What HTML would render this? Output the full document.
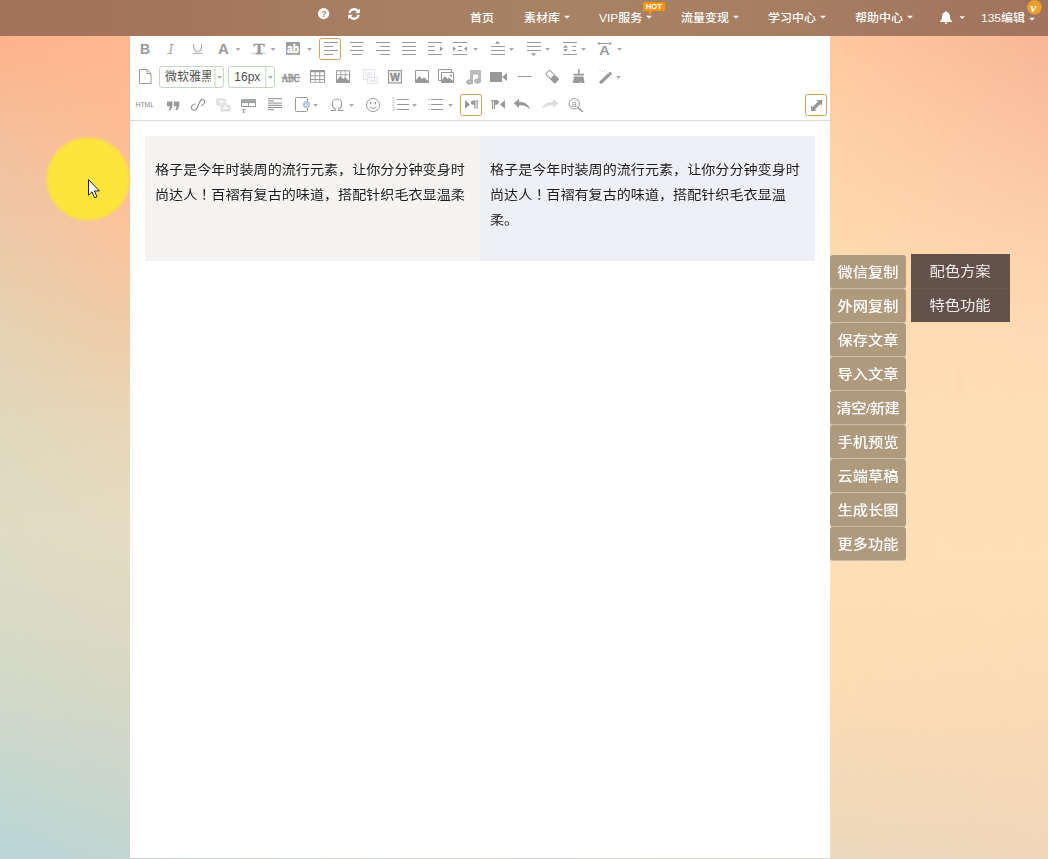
<!DOCTYPE html>
<html lang="zh-CN">
<head>
<meta charset="utf-8">
<title>135编辑器</title>
<style>
*{box-sizing:border-box;margin:0;padding:0}
html,body{width:1048px;height:859px;overflow:hidden}
body{position:relative;font-family:"Liberation Sans","Noto Sans CJK SC",sans-serif;background:#f6d2ac}
.abs{position:absolute}
#bgL{left:0;top:0;width:130px;height:859px;background:linear-gradient(180deg,#ffb68e 0px,#ffb890 36px,#febd94 136px,#fbc49c 230px,#f0cca8 330px,#e9d7b9 430px,#e6dcc2 530px,#dedac4 620px,#d6d8c6 700px,#c2d6d2 859px)}
#bgL2{left:0;top:0;width:130px;height:859px;background:linear-gradient(180deg,#fdb088 0px,#fdb28a 36px,#f4c09c 136px,#ecc8a8 230px,#e4d2b2 330px,#e0d8bc 430px,#dedcc4 530px,#d8dac6 620px,#d0d8c8 700px,#b8d6d6 859px);-webkit-mask-image:linear-gradient(90deg,#000,transparent);mask-image:linear-gradient(90deg,#000,transparent)}
#bgR{left:830px;top:0;width:218px;height:859px;background:linear-gradient(180deg,#ffc49c 0px,#ffc8a0 36px,#ffd2a8 140px,#ffdab0 250px,#ffddb3 330px,#ffdfb4 450px,#ffdfb4 560px,#fbdcb4 700px,#ecd8bc 859px)}
#bgR2{left:830px;top:0;width:218px;height:859px;background:linear-gradient(180deg,#f6b293 0px,#f8b696 36px,#fbc3a2 140px,#fdd2ac 250px,#fedab4 330px,#ffdeb5 450px,#ffdfb5 560px,#fbdab4 700px,#f0d6ba 859px);-webkit-mask-image:linear-gradient(90deg,transparent,#000);mask-image:linear-gradient(90deg,transparent,#000)}
#bgB{left:130px;top:857px;width:700px;height:2px;background:linear-gradient(90deg,#c2d6d2,#ecd8bc)}
#nav{left:0;top:0;width:1048px;height:36px;background:linear-gradient(90deg,#a27259 0%,#a3755b 15%,#a67e62 33%,#a88264 55%,#a67e62 75%,#a2775e 90%,#a0745d 100%);color:#fff;font-size:12px;font-weight:500}
#nav .it{position:absolute;top:0;height:36px;line-height:38px;white-space:nowrap;transform:translateY(-.300px) scaleY(.94);transform-origin:0 17.500px}
#nav .car{display:inline-block;width:0;height:0;border-left:3px solid transparent;border-right:3px solid transparent;border-top:3px solid #fff;vertical-align:middle;margin-left:4px;position:relative;top:-2px}
#panel{left:130px;top:36px;width:700px;height:821.600px;background:#fff}
#sep{left:130px;top:120px;width:700px;height:1px;background:#dcdcdc}
.box{top:136px;height:125px;width:335px;font-size:14px;line-height:25px;color:#1c1c1c;padding:21.300px 0 0 9.500px;white-space:nowrap}
.sb{left:830px;width:76px;height:34px;border-radius:3px;background:#b09a7e;border-bottom:1px solid #cbbba8;color:#fff;font-size:15px;font-weight:500;line-height:32px;text-align:center;white-space:nowrap}
#dark{left:911px;top:254px;width:99px;height:68px;background:#62524a;color:#f3efea;font-size:15px;text-align:center}
#dark div{height:34px;line-height:33px}
.sb span{display:inline-block;transform:scale(1.015,.91);position:relative;top:1.300px}
#dark span{display:inline-block;transform:scale(1.02,.91);position:relative;top:.300px}
#dark div+div{border-top:1px solid #67595a;line-height:31.600px}
.tc{font-style:normal;font-family:"Liberation Sans","Noto Sans CJK TC",sans-serif}
.box span{display:block;transform:scale(1.006,.93);transform-origin:0 0;line-height:26.900px}
.cb{top:66px;height:22px;border:1px solid #c5d6c2;border-radius:3px;background:#fff;color:#505050;font-size:12px;line-height:20px}
</style>
</head>
<body>
<div id="bgL" class="abs"></div><div id="bgL2" class="abs"></div>
<div id="bgR" class="abs"></div><div id="bgR2" class="abs"></div>
<div id="bgB" class="abs"></div>
<div id="panel" class="abs"></div>
<div id="sep" class="abs"></div>

<div id="nav" class="abs">
  <div class="it" style="left:470px">首页</div>
  <div class="it" style="left:524px">素材库<span class="car"></span></div>
  <div class="it" style="left:599px">VIP服务<span class="car"></span></div>
  <div class="it" style="left:681px">流量变现<span class="car"></span></div>
  <div class="it" style="left:768px">学习中心<span class="car"></span></div>
  <div class="it" style="left:855px">帮助中心<span class="car"></span></div>
  <div class="it" style="left:981px">135编辑<span class="car" style="top:0px"></span></div>
</div>
<svg class="abs" style="left:0;top:0" width="1048" height="36" viewBox="0 0 1048 36" font-family="Liberation Sans, sans-serif">
<!-- help -->
<circle cx="323.600" cy="13.600" r="5.600" fill="#fff"/>
<text x="321.300" y="16.800" font-size="8.500" font-weight="bold" fill="#a67f62">?</text>
<!-- refresh -->
<g fill="none" stroke="#fff" stroke-width="2.300">
<path d="M349.600 13.200A4.400 4.400 0 0 1 357.600 11.200"/>
<path d="M358.400 14.800A4.400 4.400 0 0 1 350.400 16.800"/>
</g>
<path d="M359.800 8.600v4.600h-4.600z" fill="#fff"/>
<path d="M348.200 19.300v-4.600h4.600z" fill="#fff"/>
<!-- HOT badge -->
<path d="M644.700 2h18.800a1.500 1.500 0 0 1 1.500 1.500v5.900a1.500 1.500 0 0 1-1.500 1.500h-10.600l-3.700 4.300-.3-4.300h-4.200a1.500 1.500 0 0 1-1.500-1.500v-5.900a1.500 1.500 0 0 1 1.500-1.500z" fill="#fb9410"/>
<text x="645.700" y="8.800" font-size="6.600" font-weight="bold" fill="#fff" textLength="16.300" lengthAdjust="spacingAndGlyphs">HOT</text>
<!-- bell -->
<path d="M946 11.300c.6 0 1 .4 1 1 2 .5 3 2.200 3 4.400 0 2.300.8 3.600 2 4.500v.8h-12v-.8c1.200-.9 2-2.200 2-4.500 0-2.200 1-3.900 3-4.400 0-.6.400-1 1-1z M944.500 22.600h3a1.500 1.500 0 0 1-3 0z" fill="#fff"/>
<path d="M959.500 16.300h5.400l-2.700 2.800z" fill="#fff"/>
<!-- V badge -->
<circle cx="1034.500" cy="7.300" r="7.300" fill="#eba02a"/>
<text x="1030.300" y="11.600" font-size="13.500" font-weight="bold" font-style="italic" font-family="Liberation Serif, serif" fill="#fff">v</text>
</svg>


<!-- content boxes -->
<div class="abs box" style="left:145px;background:#f5f4f2"><span>格子是今年时装周的流行元素，让你分分钟变身时<br>尚达人<i class="tc" lang="zh-TW">！</i>百褶有复古的味道，搭配针织毛衣显温柔</span></div>
<div class="abs box" style="left:480px;background:#eff0f5"><span>格子是今年时装周的流行元素，让你分分钟变身时<br>尚达人<i class="tc" lang="zh-TW">！</i>百褶有复古的味道，搭配针织毛衣显温<br>柔。</span></div>

<!-- side buttons -->
<div class="abs sb" style="top:255px"><span>微信复制</span></div>
<div class="abs sb" style="top:289px"><span>外网复制</span></div>
<div class="abs sb" style="top:323px"><span>保存文章</span></div>
<div class="abs sb" style="top:357px"><span>导入文章</span></div>
<div class="abs sb" style="top:391px;letter-spacing:-0.5px"><span>清空/新建</span></div>
<div class="abs sb" style="top:425px"><span>手机预览</span></div>
<div class="abs sb" style="top:459px"><span>云端草稿</span></div>
<div class="abs sb" style="top:493px"><span>生成长图</span></div>
<div class="abs sb" style="top:527px"><span>更多功能</span></div>
<div id="dark" class="abs"><div><span>配色方案</span></div><div><span>特色功能</span></div></div>

<!-- toolbar comboboxes -->
<div class="abs cb" style="left:159px;width:65px"><span style="position:absolute;left:5px;top:0;width:45.500px;overflow:hidden;white-space:nowrap">微软雅黑</span></div>
<div class="abs cb" style="left:228px;width:47px"><span style="position:absolute;left:5.300px;top:0">16px</span></div>

<svg class="abs" style="left:0;top:0" width="1048" height="130" viewBox="0 0 1048 130" font-family="Liberation Sans, sans-serif">
<defs>
<path id="dn" d="M-2.500 -1.500h5l-2.500 3z" fill="#a9b0a9"/>
</defs>
<g fill="#999" stroke="none">
<!-- ROW 1 -->
<text x="140" y="54" font-size="14" font-weight="bold">B</text>
<text x="168.200" y="53.900" font-size="14.500" font-style="italic" font-family="Liberation Serif, serif" fill="#adadad">I</text>
<path d="M169.600 44.500h4.500M167 53.500h5" fill="none" stroke="#a8a8a8" stroke-width="0.800"/>
<path d="M193.700 44v4a3.900 3.500 0 0 0 7.800 0V44" fill="none" stroke="#a0a0a0" stroke-width="1"/>
<rect x="193" y="52.800" width="9.200" height="1" fill="#a0a0a0"/>
<text x="218" y="53.800" font-size="15" font-weight="bold">A</text>
<use href="#dn" x="238" y="49.5"/>
<rect x="249.500" y="52.600" width="18" height="1.600" rx=".8" fill="#ececec"/><rect x="252" y="52.200" width="13" height="2.200" rx="1" fill="#e2e2e2"/>
<text x="253.600" y="53.600" font-size="15.500" font-weight="bold" font-family="Liberation Serif, serif" textLength="11.200" lengthAdjust="spacingAndGlyphs" stroke="#999" stroke-width=".3">T</text>
<use href="#dn" x="273" y="49.5"/>
<rect x="286" y="42" width="14" height="12.800" fill="#9a9c9e"/>
<text x="287" y="52.900" font-size="12" font-weight="bold" fill="#fff" stroke="#fff" stroke-width=".350" textLength="12" lengthAdjust="spacingAndGlyphs">ab</text>
<use href="#dn" x="309.5" y="49.5"/>
<!-- align left (active) -->
<rect x="319.500" y="38.500" width="21" height="21" rx="2" fill="#fff" stroke="#d2a064"/>
<g fill="#999">
<rect x="324" y="42" width="14" height="1"/><rect x="324" y="46" width="9" height="1"/><rect x="324" y="50" width="14" height="1"/><rect x="324" y="54" width="9" height="1"/>
<!-- center -->
<rect x="350" y="42" width="14" height="1"/><rect x="352" y="46" width="10" height="1"/><rect x="350" y="50" width="14" height="1"/><rect x="352" y="54" width="10" height="1"/>
<!-- right -->
<rect x="376" y="42" width="14" height="1"/><rect x="380" y="46" width="10" height="1"/><rect x="376" y="50" width="14" height="1"/><rect x="380" y="54" width="10" height="1"/>
<!-- justify -->
<rect x="402" y="42" width="14" height="1"/><rect x="402" y="46" width="14" height="1"/><rect x="402" y="50" width="14" height="1"/><rect x="402" y="54" width="14" height="1"/>
<!-- indent -->
<rect x="428" y="42" width="14" height="1"/><rect x="428" y="46" width="7" height="1"/><rect x="428" y="50" width="7" height="1"/><rect x="428" y="54" width="14" height="1"/>
<path d="M440 46.200l3 2.500-3 2.500z"/>
<!-- justify-indent -->
<rect x="453" y="42" width="14" height="1"/><rect x="453" y="54" width="14" height="1"/>
<rect x="458" y="46" width="4" height="1"/><rect x="458" y="50" width="4" height="1"/>
<path d="M453 46.200l3 2.500-3 2.500z"/><path d="M467 46.200l-3 2.500 3 2.500z"/>
<use href="#dn" x="475.500" y="49.500"/>
<!-- rowspacing top -->
<path d="M497.500 41l2.700 2.800h-5.400z"/>
<rect x="491" y="46" width="14" height="1"/><rect x="491" y="50" width="14" height="1"/><rect x="491" y="54" width="14" height="1"/>
<use href="#dn" x="511.500" y="49.500"/>
<!-- rowspacing bottom -->
<rect x="527" y="42" width="14" height="1"/><rect x="527" y="46" width="14" height="1"/><rect x="527" y="50" width="14" height="1"/>
<path d="M533.500 56l2.700-2.800h-5.400z"/>
<use href="#dn" x="547.500" y="49.500"/>
<!-- lineheight -->
<rect x="563" y="42" width="14" height="1"/><rect x="563" y="54" width="14" height="1"/>
<rect x="572" y="46" width="4" height="1"/><rect x="572" y="50" width="4" height="1"/>
<path d="M565.500 45l2.500 2.700h-5z"/><path d="M565.500 51.700l2.500-2.700h-5z"/>
<use href="#dn" x="583.500" y="49.500"/>
<!-- letterspacing -->
<rect x="598.500" y="43" width="12" height="1"/><path d="M597.300 43.500l2.200-1.700v3.400z"/><path d="M611.700 43.500l-2.200-1.700v3.400z"/>
<text x="599.200" y="54.800" font-size="13.200" font-weight="bold" textLength="10.500" lengthAdjust="spacingAndGlyphs">A</text>
<use href="#dn" x="619.500" y="49.500"/>
</g>
</g>
<g fill="#999" stroke="none">
<!-- doc -->
<path d="M139.500 69.500h7.500l4 4v10h-11.500z M147 69.500v4h4" fill="none" stroke="#999"/>
<!-- combobox dividers/arrows -->
<rect x="214.500" y="67" width="1" height="20" fill="#c5d6c2"/><use href="#dn" x="219.500" y="77.500"/>
<rect x="265.300" y="67" width="1" height="20" fill="#c5d6c2"/><use href="#dn" x="270.500" y="77.500"/>
<!-- ABC strike -->
<text x="282" y="81.800" font-size="12.500" font-weight="bold" font-family="Liberation Serif, serif" textLength="17.500" lengthAdjust="spacingAndGlyphs" stroke="#999" stroke-width="0.600">ABC</text>
<rect x="281.500" y="77" width="19" height="1.200"/>
<!-- table -->
<path d="M310 70h15v12.800h-15z M311 72.200v3.100h3.600v-3.100z M315.500 72.200v3.100h3.800v-3.100z M320.200 72.200v3.100h3.800v-3.100z M311 76.200v2.900h3.600v-2.900z M315.500 76.200v2.900h3.800v-2.900z M320.200 76.200v2.900h3.800v-2.900z M311 80v1.900h3.600v-1.900z M315.500 80v1.900h3.800v-1.900z M320.200 80v1.900h3.800v-1.900z" fill-rule="evenodd"/>
<!-- image-table -->
<path d="M336.500 70.800h13v11.700h-13z" fill="none" stroke="#999"/>
<path d="M340.800 71v7M345.300 71v7M337 74.700h12" fill="none" stroke="#a4a4a4" stroke-width="0.900"/>
<path d="M337 82v-2l3.500-4 2.500 3 2-1.800 4 3.600v1.200z"/>
<!-- W disabled -->
<g fill="#fff" stroke="#e4e5ea"><rect x="363.500" y="69.500" width="11" height="10"/><rect x="367.500" y="77.500" width="10" height="6"/></g>
<text x="365.500" y="77" font-size="7" fill="#e6e7ec" font-weight="bold">W</text>
<rect x="369.500" y="79.500" width="6" height="2.500" fill="#e8e9ee"/>
<!-- W -->
<rect x="388.600" y="70.600" width="12.800" height="12.300" fill="none" stroke="#999" stroke-width="1.200"/>
<text x="390.200" y="80.800" font-size="10" font-weight="bold" textLength="9.600" lengthAdjust="spacingAndGlyphs" fill="#8c8c8c" stroke="#8c8c8c" stroke-width=".4">W</text>
<!-- image -->
<path d="M415.500 70.500h13v12h-13z" fill="none" stroke="#999"/>
<path d="M416 82v-2l3.500-4 2.500 3 2-1.800 4 3.600v1.200z"/>
<!-- multi-image -->
<path d="M438.500 69.500h13v11h-13z" fill="#fff" stroke="#999"/>
<path d="M441.500 72.500h12v10h-12z" fill="#fff" stroke="#999"/>
<path d="M442 82v-2l3-4 2.500 3 1.500-1.500 4 3.500v1z"/>
<rect x="450" y="74.500" width="2" height="2"/>
<!-- music -->
<g fill="#bdbdbd" stroke="#a8a8a8" stroke-width="0.700">
<path d="M470.500 70.500h10v11h-2v-7.500h-6v9.500h-2z" />
<ellipse cx="469.500" cy="82" rx="3" ry="2.300"/><ellipse cx="477.500" cy="81" rx="3" ry="2.300"/>
</g>
<!-- video -->
<path d="M490 72h12v10h-12z M502 77l5-4v8z"/>
<!-- hr -->
<rect x="518" y="76" width="14" height="1"/>
<!-- eraser -->
<g transform="translate(552.200 76.700) rotate(45)">
<rect x="-6.500" y="-2.800" width="13" height="5.600" rx="0.800" fill="#fff" stroke="#999"/>
<path d="M0 -2.800h5.700a.8 .8 0 0 1 .8 .8v4a.8 .8 0 0 1-.8 .8h-5.700z"/>
</g>
<!-- brush -->
<path d="M578 69h1.500v4.700h4.500v1.800h-10.500v-1.800h4.500z M574 76.500h9.500l1 6.500h-3l-.5-2-.8 2h-7.400z"/>
<!-- wand -->
<path d="M599 82l11-10.500 2.200 2.300-11 10.500z"/>
<path d="M608.300 74.200l1.200-1.100" stroke="#fff" stroke-width="0.800"/>
<g fill="#bbb"><rect x="599.500" y="69.500" width="1" height="1"/><rect x="602" y="71" width="1" height="1"/><rect x="604" y="69.500" width="1" height="1"/><rect x="610.500" y="77.500" width="1" height="1"/></g>
<use href="#dn" x="618.500" y="77.500"/>
</g>

<g fill="#999" stroke="none">
<text x="135.500" y="107.200" font-size="7" fill="#888" textLength="18.500" lengthAdjust="spacingAndGlyphs">HTML</text>
<!-- quote -->
<path d="M167 101.500h5.500v4.200l-1.600 4.300h-2.200l1.200-3.800h-2.900z M173.800 101.500h5.500v4.200l-1.600 4.300h-2.200l1.200-3.800h-2.900z"/>
<!-- link -->
<path d="M195 104C192.500 104.500 191 106.500 191.500 108.300C192 110.300 194.500 110.800 196 109.500C197.500 108 198 106 199 103.500C200 101 201.500 99.200 203 99.500C204.800 100 205 102 204 103.500C203.300 104.600 202.500 105.200 201.800 105.500" fill="none" stroke="#999" stroke-width="1.250" stroke-linecap="round"/>
<!-- unlink -->
<g fill="#dfdfdf" stroke="#dfdfdf" stroke-width="1.600" stroke-linejoin="round">
<path d="M217 99.200h8.500v5.400h-8.500z"/><path d="M221.300 105.600h8.500v5.200h-8.500z"/></g>
<path d="M218.800 101.600h5.800M221.700 101.600v3.200M223 108.200h5.200M225.600 108.200v-3.200" fill="none" stroke="#fff" stroke-width="1.500"/>
<!-- table header -->
<path d="M241.500 99.500h14v7h-14z M241.500 102.500h14 M248.500 102.500v4" fill="none" stroke="#999"/>
<rect x="241" y="99" width="15" height="3.200" fill="#a4aaa4"/>
<text x="241.300" y="113.300" font-size="7" font-weight="bold" font-family="Liberation Serif, serif" fill="#8c8c8c">T</text>
<!-- lines -->
<g fill="#8e8e8e"><rect x="268" y="98.200" width="14" height="1"/><rect x="268" y="100.400" width="6" height="1"/><rect x="268" y="102.600" width="14" height="1"/><rect x="268" y="104.800" width="14" height="1"/><rect x="268" y="107" width="14" height="1"/><rect x="268" y="109.200" width="6" height="1"/></g>
<!-- page background -->
<rect x="295.500" y="97.500" width="12" height="14" rx="1" fill="#fff" stroke="#999"/>
<circle cx="306.500" cy="104.700" r="3.600" fill="#b9c6e2"/>
<circle cx="306.500" cy="104.700" r="1.800" fill="#cfe0d8"/>
<use href="#dn" x="315.500" y="105.500"/>
<!-- omega -->
<path d="M330.500 110.500h4.800v-1.300c-2-1.300-3-3-3-5.200 0-2.800 1.900-5 4.700-5s4.700 2.200 4.700 5c0 2.200-1 3.900-3 5.200v1.300h4.800" fill="none" stroke="#999" stroke-width="1.100"/>
<use href="#dn" x="351.500" y="105.500"/>
<!-- smiley -->
<circle cx="373" cy="105" r="6.500" fill="none" stroke="#999" stroke-width="1"/>
<rect x="370" y="102" width="1.300" height="2.400"/><rect x="374.700" y="102" width="1.300" height="2.400"/>
<path d="M369.500 106.500c1 2.600 6 2.600 7 0" fill="none" stroke="#999" stroke-width="1"/>
<!-- ol -->
<g font-size="4.500" fill="#a4a4a4"><text x="392" y="100.800">1</text><text x="392" y="106">2</text><text x="392" y="111.200">3</text></g>
<rect x="397" y="99" width="12" height="1"/><rect x="397" y="104" width="12" height="1"/><rect x="397" y="109" width="12" height="1"/>
<use href="#dn" x="414.500" y="105.500"/>
<!-- ul -->
<rect x="428.500" y="99" width="1" height="1"/><rect x="428.500" y="104" width="1" height="1"/><rect x="428.500" y="109" width="1" height="1"/>
<rect x="431" y="99" width="12" height="1"/><rect x="431" y="104" width="12" height="1"/><rect x="431" y="109" width="12" height="1"/>
<use href="#dn" x="450.500" y="105.500"/>
<!-- LTR active -->
<rect x="460.500" y="94.500" width="21" height="21" rx="2" fill="#fff" stroke="#d2a064"/>
<path d="M465 100l5 4.400-5 4.400z"/>
<path d="M473 100.400H478.500V101.500H477.700V108.700H476.500V101.500H475.400V108.700H474.200V104.800H473A2.200 2.200 0 0 1 473 100.400Z"/>
<!-- RTL -->
<path d="M491 100H496.500A2.350 2.350 0 0 1 496.500 104.700H495V108.900H493.800V101H493V108.900H491.900V101H491Z"/>
<path d="M505 100l-5 4.400 5 4.400z"/>
<!-- undo -->
<path d="M519 98.800l-5.200 4.400 5.200 4.900v-2.900c4.500-.2 8.200 1 10.800 4.300-.8-4.800-4.600-7.500-10.800-7.700z"/>
<!-- redo -->
<path d="M553 98.800l5.200 4.400-5.200 4.900v-2.900c-4.500-.2-8.200 1-10.800 4.300.8-4.800 4.600-7.500 10.800-7.700z" fill="#dcdcdc"/>
<!-- search -->
<circle cx="574.300" cy="103.800" r="5.200" fill="none" stroke="#999" stroke-width="1"/>
<path d="M578.300 107.800l4.200 3.700" stroke="#999" stroke-width="1.600" stroke-linecap="round"/>
<text x="571.300" y="106.600" font-size="9.500" fill="#999">a</text>
<!-- fullscreen -->
<rect x="805.500" y="94.500" width="21" height="21" rx="2" fill="#fff" stroke="#d2a066"/>
<path d="M822 100v5.800h-0l-5.800-5.800z M811 111v-5.800l5.800 5.800z"/>
<path d="M819.500 102.500l-6 6" stroke="#999" stroke-width="3.200" fill="none"/>
</g>

</svg>

<div class="abs" style="left:42.700px;top:133.900px;width:90px;height:90px;border-radius:50%;background:radial-gradient(circle closest-side,#fce43a 0,#fce43a 85%,rgba(252,228,58,.8) 89%,rgba(252,228,58,.45) 92.500%,rgba(252,228,58,0) 96.500%)"></div>
<svg class="abs" style="left:84px;top:175px" width="20" height="26" viewBox="-4 -4 20 26"><path d="M0.500 0.500V16.200L4 12.800L6.600 18.800L9 17.800L6.400 11.900H11.300Z" fill="#fff" stroke="#222" stroke-width="1" stroke-linejoin="round"/></svg>

</body>
</html>
